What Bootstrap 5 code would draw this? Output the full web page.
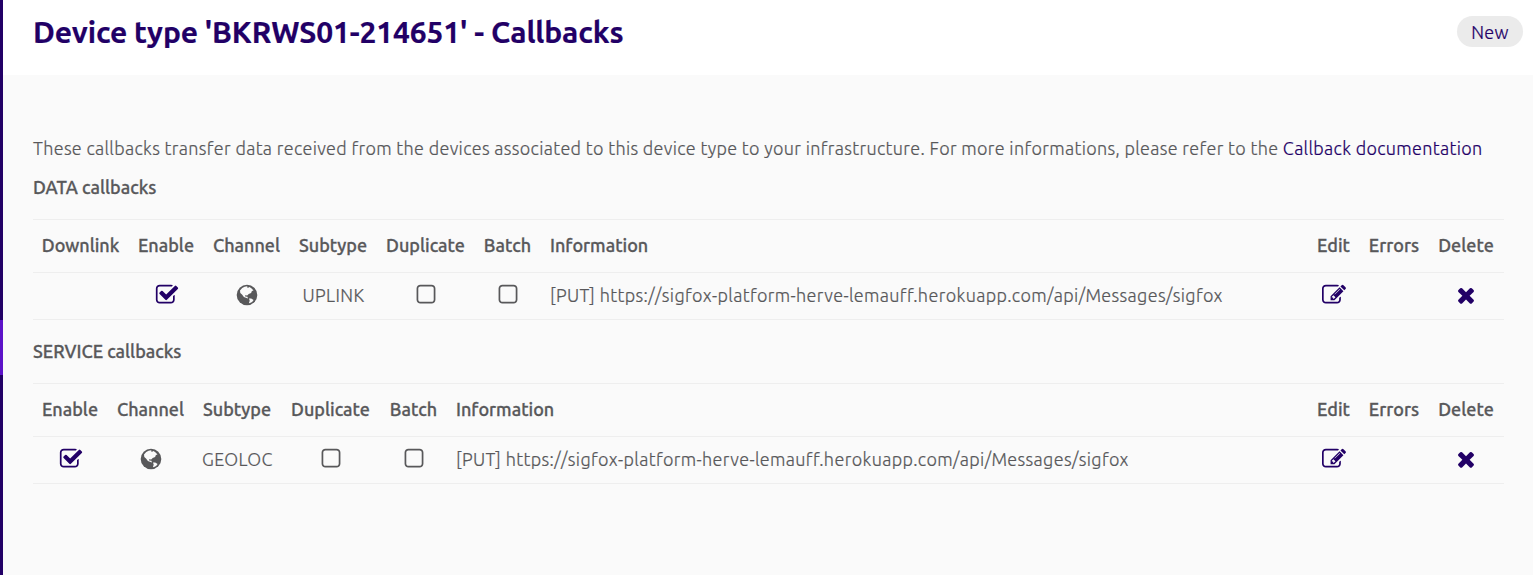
<!DOCTYPE html>
<html lang="en">
<head>
<meta charset="utf-8">
<title>Callbacks</title>
<meta name="viewport" content="width=device-width, initial-scale=1">
<link href="https://cdn.jsdelivr.net/npm/bootstrap@5.3.0/dist/css/bootstrap.min.css" rel="stylesheet">
<style>
  body { font-family: Ubuntu, "Noto Sans", sans-serif; font-size: 18px; font-weight: 300; letter-spacing: .36px; -webkit-text-stroke: .2px; color: #58585a; background: #fafafa; line-height: 24px; overflow: hidden; }
  .side-strip { width: 3px; background: #220066; padding-top: 320px; }
  .side-mark { height: 55px; background: #5c12c8; }
  .page-head { height: 75px; background: #fff; padding: 15px 10px 0 30px; }
  .page-title { font-size: 30px; line-height: 34px; letter-spacing: -.14px; color: #220066; font-weight: 700; }
  .btn-new { height: 31px; width: 66px; margin-top: 1px; background: #ebebeb; color: #220066; line-height: 32px; }
  .page-body { padding: 61px 29px 0 30px; }
  .doc-link { color: #220066; text-decoration: none; }
  .sub-head { font-size: 18px; line-height: 24px; font-weight: 500; letter-spacing: 0; margin: 0 0 20px; -webkit-text-stroke: .3px; }
  .intro { margin: 0 0 15px; white-space: nowrap; letter-spacing: .322px; }
  .cb-table { width: 1471px; table-layout: fixed; color: #58585a; text-align: center; margin-bottom: 19px; }
  .cb-table > :not(caption) > * > * { padding: 0 0 2px; color: #58585a; background: transparent; vertical-align: middle; white-space: nowrap; border-bottom: 1px solid #eee; }
  .cb-table > thead > tr > th { height: 53px; padding-right: 1px; font-weight: 500; letter-spacing: 0; border-top: 1px solid #eee; -webkit-text-stroke: .3px; }
  .cb-table tbody td { height: 47px; }
  .cb-table > :not(caption) > tr > .info-cell { text-align: left; padding-left: 9px; }
  .cb-icon { display: block; width: 24px; height: 24px; margin: 0 auto; fill: #58585a; }
  .cb-icon.ink { fill: #220066; }
  .cb-table > tbody > tr > td:last-child { padding-right: 1px; }
</style>
</head>
<body>
<svg width="0" height="0" class="position-absolute" aria-hidden="true">
  <symbol id="i-check" viewBox="0 0 1792 1792"><path d="M1472 930v318q0 119-84.5 203.5t-203.5 84.5h-832q-119 0-203.5-84.5t-84.5-203.5v-832q0-119 84.5-203.5t203.5-84.5h832q63 0 117 25 15 7 18 23 3 17-9 29l-49 49q-10 10-23 10-3 0-9-2-23-6-45-6h-832q-66 0-113 47t-47 113v832q0 66 47 113t113 47h832q66 0 113-47t47-113v-254q0-13 9-22l64-64q10-10 23-10 6 0 12 3 20 8 20 29zm231-489l-814 814q-24 24-57 24t-57-24l-430-430q-24-24-24-57t24-57l110-110q24-24 57-24t57 24l263 263 647-647q24-24 57-24t57 24l110 110q24 24 24 57t-24 57z"/></symbol>
  <symbol id="i-square" viewBox="0 0 1792 1792"><path d="M1312 256h-832q-66 0-113 47t-47 113v832q0 66 47 113t113 47h832q66 0 113-47t47-113v-832q0-66-47-113t-113-47zm288 160v832q0 119-84.5 203.5t-203.5 84.5h-832q-119 0-203.5-84.5t-84.5-203.5v-832q0-119 84.5-203.5t203.5-84.5h832q119 0 203.5 84.5t84.5 203.5z"/></symbol>
  <symbol id="i-times" viewBox="0 0 1792 1792"><path d="M1490 1322q0 40-28 68l-136 136q-28 28-68 28t-68-28l-294-294-294 294q-28 28-68 28t-68-28l-136-136q-28-28-28-68t28-68l294-294-294-294q-28-28-28-68t28-68l136-136q28-28 68-28t68 28l294 294 294-294q28-28 68-28t68 28l136 136q28 28 28 68t-28 68l-294 294 294 294q28 28 28 68z"/></symbol>
  <symbol id="i-edit" viewBox="0 0 1792 1792"><path d="M888 1184l116-116-152-152-116 116v56h96v96h56zm440-720q-16-16-33 1l-350 350q-17 17-1 33t33-1l350-350q17-17 1-33zm80 594v190q0 119-84.5 203.5t-203.5 84.5h-832q-119 0-203.5-84.5t-84.5-203.5v-832q0-119 84.5-203.5t203.5-84.5h832q63 0 117 25 15 7 18 23 3 17-10 30l-49 49q-14 14-32 8-23-6-45-6h-832q-66 0-113 47t-47 113v832q0 66 47 113t113 47h832q66 0 113-47t47-113v-126q0-13 9-22l64-64q15-15 35-7t20 29zm-96-738l288 288-672 672h-288v-288zm444 132l-92 92-288-288 92-92q28-28 68-28t68 28l152 152q28 28 28 68t-28 68z"/></symbol>
  <symbol id="i-globe" viewBox="0 0 24 24"><circle cx="12" cy="12" r="10.3"/><path fill="#fafafa" d="M5 7.4L7.2 5 9.6 3.8l2.6-.6.4 1.7 2-.9 2 1.6 1.9 2-1.6.3-.8 2-2.4 1.1-1.5 1.4-2.1-.1.1 1.3 2.2.2.6 1.8-1.5-.5-2.6-1.2-1.9-2.4L5.3 10zM14 15.6l2.2-.2 2.4 1.7-1.5 1.9-2.6 1.3-.5-.5.7-2z"/></symbol>
</svg>
<div class="d-flex vh-100">
  <div class="side-strip flex-shrink-0"><div class="side-mark"></div></div>
  <main class="flex-grow-1">
    <header class="page-head d-flex justify-content-between align-items-start">
      <h1 class="page-title m-0">Device type 'BKRWS01-214651' - Callbacks</h1>
      <a class="btn-new rounded-pill text-center text-decoration-none" href="#">New</a>
    </header>
    <div class="page-body">
      <p class="intro">These callbacks transfer data received from the devices associated to this device type to your infrastructure. For more informations, please refer to the <a class="doc-link" href="#">Callback documentation</a></p>
      <h2 class="sub-head">DATA callbacks</h2>
      <table class="table cb-table">
        <colgroup><col style="width:96px"><col style="width:75px"><col style="width:86px"><col style="width:87px"><col style="width:98px"><col style="width:66px"><col><col style="width:52px"><col style="width:69px"><col style="width:75px"></colgroup>
        <thead><tr><th>Downlink</th><th>Enable</th><th>Channel</th><th>Subtype</th><th>Duplicate</th><th>Batch</th><th class="info-cell">Information</th><th>Edit</th><th>Errors</th><th>Delete</th></tr></thead>
        <tbody><tr>
          <td></td>
          <td><svg class="cb-icon ink"><use href="#i-check"/></svg></td>
          <td><svg class="cb-icon"><use href="#i-globe"/></svg></td>
          <td>UPLINK</td>
          <td><svg class="cb-icon"><use href="#i-square"/></svg></td>
          <td><svg class="cb-icon"><use href="#i-square"/></svg></td>
          <td class="info-cell">[PUT] https://sigfox-platform-herve-lemauff.herokuapp.com/api/Messages/sigfox</td>
          <td><svg class="cb-icon ink"><use href="#i-edit"/></svg></td>
          <td></td>
          <td><svg class="cb-icon ink"><use href="#i-times"/></svg></td>
        </tr></tbody>
      </table>
      <h2 class="sub-head">SERVICE callbacks</h2>
      <table class="table cb-table">
        <colgroup><col style="width:75px"><col style="width:86px"><col style="width:87px"><col style="width:100px"><col style="width:66px"><col><col style="width:52px"><col style="width:69px"><col style="width:75px"></colgroup>
        <thead><tr><th>Enable</th><th>Channel</th><th>Subtype</th><th>Duplicate</th><th>Batch</th><th class="info-cell">Information</th><th>Edit</th><th>Errors</th><th>Delete</th></tr></thead>
        <tbody><tr>
          <td><svg class="cb-icon ink"><use href="#i-check"/></svg></td>
          <td><svg class="cb-icon"><use href="#i-globe"/></svg></td>
          <td>GEOLOC</td>
          <td><svg class="cb-icon"><use href="#i-square"/></svg></td>
          <td><svg class="cb-icon"><use href="#i-square"/></svg></td>
          <td class="info-cell">[PUT] https://sigfox-platform-herve-lemauff.herokuapp.com/api/Messages/sigfox</td>
          <td><svg class="cb-icon ink"><use href="#i-edit"/></svg></td>
          <td></td>
          <td><svg class="cb-icon ink"><use href="#i-times"/></svg></td>
        </tr></tbody>
      </table>
    </div>
  </main>
</div>
</body>
</html>
